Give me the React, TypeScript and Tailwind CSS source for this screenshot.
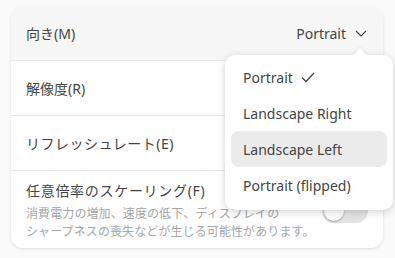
const options = ['Portrait', 'Landscape Right', 'Landscape Left', 'Portrait (flipped)'];

function Chevron() {
  return (
    <svg width="12" height="7" viewBox="0 0 12 7" fill="none" stroke="#444" strokeWidth="1.1">
      <path d="M1 1l5 5 5-5" />
    </svg>
  );
}

function Check() {
  return (
    <svg width="14" height="11" viewBox="0 0 14 11" fill="none" stroke="#444" strokeWidth="1.3">
      <path d="M1 5.5l4 4L13 1" />
    </svg>
  );
}

export default function App() {
  return (
    <div
      className="relative w-[395px] h-[258px] bg-[#fafafa] pl-[11px] pt-[7px] text-[#444]"
      style={{ fontFamily: '"Noto Sans", "Noto Sans CJK JP", sans-serif' }}
    >
      {/* Card */}
      <div className="w-[372px] rounded-[12px] bg-white shadow-[0_1px_3px_rgba(0,0,0,0.12)] overflow-hidden">
        <div className="h-[54px] bg-[#f6f6f6] border-b border-[#e8e8e8] flex items-center justify-between pl-[15px] pr-[16px] text-[14px]">
          <span>向き(M)</span>
          <div className="flex items-center gap-[9px]">
            <span>Portrait</span>
            <Chevron />
          </div>
        </div>
        <div className="h-[55px] border-b border-[#e8e8e8] flex items-center pl-[15px] text-[14px]">解像度(R)</div>
        <div className="h-[55px] border-b border-[#e8e8e8] flex items-center pl-[15px] text-[14px] tracking-[0.5px]">
          リフレッシュレート(E)
        </div>
        <div className="h-[77px] flex items-center justify-between pl-[15px] pr-[15px] pt-[3px]">
          <div className="flex flex-col">
            <span className="text-[14px] leading-[20px] tracking-[0.7px]">任意倍率のスケーリング(F)</span>
            <span className="text-[12px] leading-[18px] text-[#a6a6a6] mt-[4px] tracking-[0.1px]">
              消費電力の増加、速度の低下、ディスプレイの
              <br />
              シャープネスの喪失などが生じる可能性があります。
            </span>
          </div>
          <div className="w-[46px] h-[24px] rounded-full bg-[#e3e3e3] p-[2px] flex items-center">
            <div className="w-[20px] h-[20px] rounded-full bg-white shadow-[0_1px_2px_rgba(0,0,0,0.3)]" />
          </div>
        </div>
      </div>

      {/* Popover */}
      <div className="absolute left-[225px] top-[55px] w-[168px] rounded-[10px] bg-white shadow-[0_2px_8px_rgba(0,0,0,0.18)] px-[6px] pt-[4px] pb-[7px] text-[14px]">
        <div className="absolute -top-[5px] left-[130px] w-[10px] h-[10px] bg-white rotate-45 shadow-[-1px_-1px_2px_rgba(0,0,0,0.06)]" />
        {options.map((o, i) => (
          <div
            key={o}
            className={`relative h-[36px] flex items-center gap-[8px] px-[12px] rounded-[8px] ${i === 2 ? 'bg-[#ebebeb]' : ''}`}
          >
            <span>{o}</span>
            {i === 0 && <Check />}
          </div>
        ))}
      </div>
    </div>
  );
}
